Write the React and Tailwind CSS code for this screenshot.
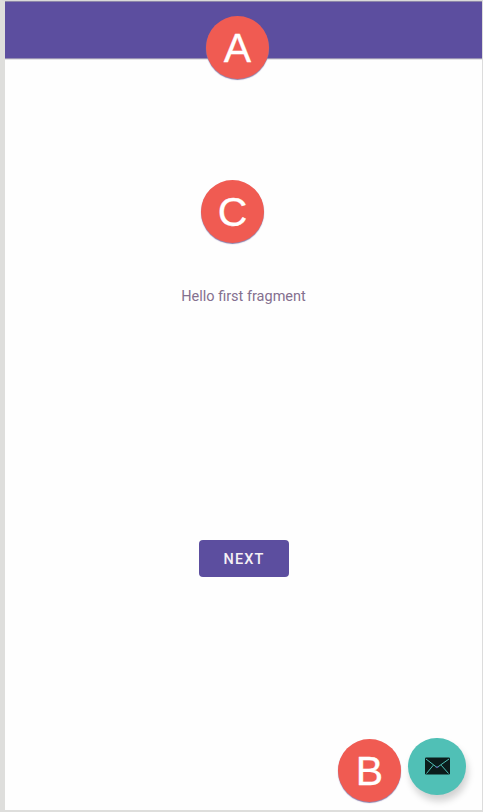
import React from 'react';

function Marker({ letter, className }) {
  return (
    <div
      className={`absolute flex size-[63px] items-center justify-center rounded-full bg-[#f05b52] pt-[2px] font-['Liberation_Sans',sans-serif] text-[41px] leading-none text-white shadow-[0_1px_1px_#8b7fab] [-webkit-text-stroke:0.3px_white] ${className}`}
    >
      {letter}
    </div>
  );
}

function MailIcon() {
  return (
    <svg className="h-[18px] w-[25px]" viewBox="0 0 25 18">
      <rect x="0" y="0.5" width="25" height="17" rx="1.2" fill="#0b1c1b" />
      <path d="M1 2 L12 10.5 L24 2 M1.5 16.5 L8.3 8.2 M23.5 16.5 L16.2 8.2" fill="none" stroke="#50c0b6" strokeWidth="1" />
      <path d="M10.8 9.8 L12 10.6 L13.3 9.8" fill="none" stroke="#5c5a9e" strokeWidth="1.2" />
    </svg>
  );
}

export default function App() {
  return (
    <div className="relative flex h-[812px] w-[483px] flex-col overflow-hidden border-t border-r border-b-2 border-l-[5px] border-t-[#d9d9d9] border-r-[#dcdcdc] border-b-[#dededc] border-l-[#dededc] bg-[#fefefe] font-[Roboto,sans-serif]">
      <div className="absolute inset-y-0 -left-[5px] w-px bg-[repeating-linear-gradient(to_bottom,#dededc_0px,#dededc_7px,#ffffff_7px,#ffffff_8px)]" />
      <header className="h-[58px] shrink-0 border-t border-b border-t-[#8c86a8] border-b-[#9890b4] bg-[#5c4e9f]" />
      <div className="h-px shrink-0 bg-[#e3e3e5]" />
      <main className="flex flex-1 flex-col items-center">
        <p className="mt-[227px] text-[14.5px] leading-5 text-[#84708f]">Hello first fragment</p>
        <button className="mt-[233px] flex h-[37px] w-[90px] items-center justify-center rounded-[4px] bg-[#5c4e9f] pt-[2px] pl-px text-[14.5px] font-medium tracking-[1.1px] text-[#f5f1f5]">
          NEXT
        </button>
      </main>
      <Marker letter="A" className="top-[14.5px] left-[201px]" />
      <Marker letter="C" className="top-[178.5px] left-[196px]" />
      <Marker letter="B" className="top-[738px] left-[333px]" />
      <button aria-label="Mail" className="absolute top-[736.5px] left-[403px] flex h-[57px] w-[58px] items-center justify-center rounded-full bg-[#50c0b6] shadow-[2px_6px_7px_#d2d2d2]">
        <MailIcon />
      </button>
    </div>
  );
}
